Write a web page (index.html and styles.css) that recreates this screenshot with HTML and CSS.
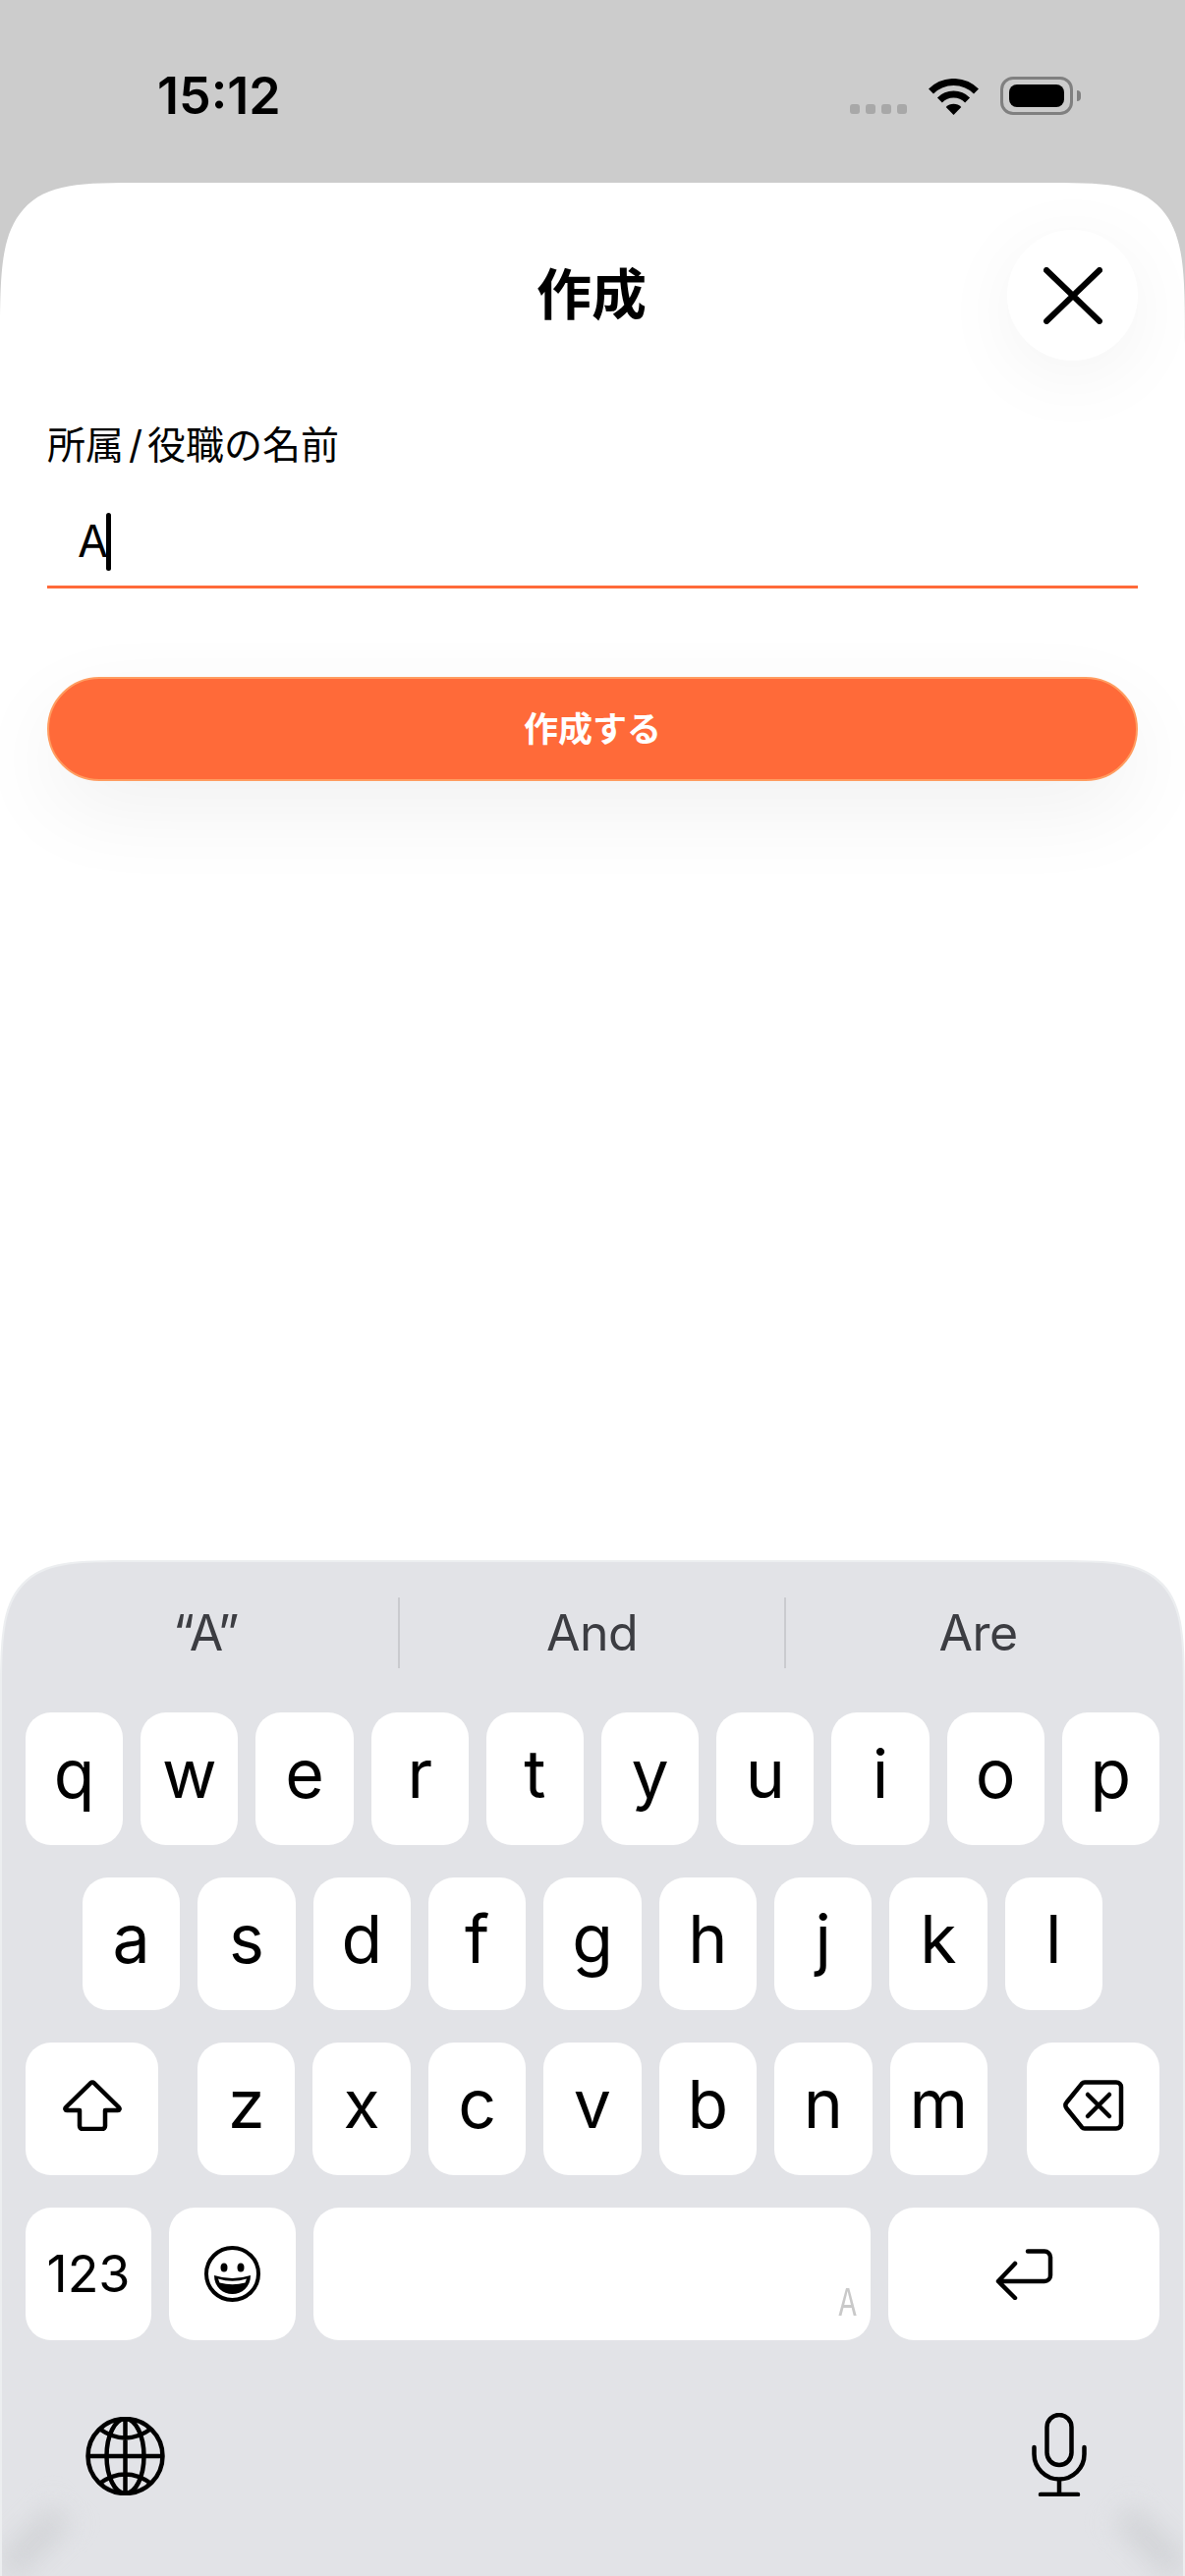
FILE: index.html
```html
<!DOCTYPE html>
<html lang="ja">
<head>
    <meta charset="UTF-8">
    <meta name="viewport" content="width=device-width, initial-scale=1.0">
    <title>作成</title>
    <link rel="stylesheet" href="styles.css">
</head>
<body>
<div class="page">
    <div class="status">
        <span class="time">15:12</span>
        <div class="status-icons">
            <div class="signal"><i></i><i></i><i></i><i></i></div>
            <svg class="wifi" width="51" height="37" viewBox="0 0 51 37">
                <path d="M2.5 13a32.5 32.5 0 0 1 46 0M11.4 21.9a20 20 0 0 1 28.2 0" fill="none" stroke="#000" stroke-width="7"/>
                <path d="M25.5 37L17.7 29A11 11 0 0 1 33.3 29Z" fill="#000"/>
            </svg>
            <div class="battery"><div class="battery-fill"></div></div>
            <div class="battery-cap"></div>
        </div>
    </div>

    <div class="sheet">
        <div class="sheet-head">
            <h1 class="title">作成</h1>
            <button class="close">
                <svg width="60" height="58" viewBox="0 0 60 58"><path d="M3 3L57 55M57 3L3 55" fill="none" stroke="#000" stroke-width="6" stroke-linecap="round"/></svg>
            </button>
        </div>
        <label class="field-label">所属<span class="slash">/</span>役職の名前</label>
        <div class="field"><span class="field-text">A</span><span class="caret"></span></div>
        <button class="submit">作成する</button>
    </div>

    <div class="keyboard">
        <div class="suggestions">
            <div class="suggestion">“A”</div>
            <div class="suggestion">And</div>
            <div class="suggestion">Are</div>
        </div>
        <div class="rows">
            <div class="row">
                <div class="key">q</div><div class="key">w</div><div class="key">e</div><div class="key">r</div><div class="key">t</div>
                <div class="key">y</div><div class="key">u</div><div class="key">i</div><div class="key">o</div><div class="key">p</div>
            </div>
            <div class="row row-middle">
                <div class="key">a</div><div class="key">s</div><div class="key">d</div><div class="key">f</div><div class="key">g</div>
                <div class="key">h</div><div class="key">j</div><div class="key">k</div><div class="key">l</div>
            </div>
            <div class="row row-third">
                <div class="key key-shift">
                    <svg width="60" height="52" viewBox="0 0 60 52"><path d="M28.4 3.2a2.3 2.3 0 0 1 3.2 0L57 28c1.2 1.2.5 3-1 3H43v16a3 3 0 0 1-3 3H20a3 3 0 0 1-3-3V31H4c-1.5 0-2.200-1.800-1-3z" fill="none" stroke="#000" stroke-width="4.500" stroke-linejoin="round"/></svg>
                </div>
                <div class="letters">
                    <div class="key">z</div><div class="key">x</div><div class="key">c</div><div class="key">v</div>
                    <div class="key">b</div><div class="key">n</div><div class="key">m</div>
                </div>
                <div class="key key-shift">
                    <svg width="62" height="52" viewBox="0 0 62 52"><path d="M22 2.500H54a5 5 0 0 1 5 5V44.500a5 5 0 0 1-5 5H22a4 4 0 0 1-3-1.300L3.500 29a4.500 4.500 0 0 1 0-6L19 3.800A4 4 0 0 1 22 2.500zM25 15L47 37M47 15L25 37" fill="none" stroke="#000" stroke-width="4.500" stroke-linecap="round" stroke-linejoin="round"/></svg>
                </div>
            </div>
            <div class="row">
                <div class="key key-123">123</div>
                <div class="key key-emoji">
                    <svg width="57" height="57" viewBox="0 0 57 57">
                        <circle cx="28.500" cy="28.500" r="26.500" fill="none" stroke="#000" stroke-width="4"/>
                        <ellipse cx="20" cy="22" rx="3.500" ry="4.500"/>
                        <ellipse cx="37" cy="22" rx="3.500" ry="4.500"/>
                        <path d="M10 30Q28.500 36 47 30C47 42 38 49 28.500 49C19 49 10 42 10 30Z"/>
                        <path d="M14 33.500Q28.500 38 43 33.500L41.500 37.500Q28.500 41 15.500 37.500Z" fill="#fff"/>
                    </svg>
                </div>
                <div class="key key-space"><span class="space-mark">A</span></div>
                <div class="key key-return">
                    <svg width="59" height="52" viewBox="0 0 59 52"><path d="M33 2.500H50a6 6 0 0 1 6 6V27a6 6 0 0 1-6 6H3M20 15L3 33L20 50" fill="none" stroke="#000" stroke-width="4.500" stroke-linecap="round" stroke-linejoin="round"/></svg>
                </div>
            </div>
        </div>
        <div class="keyboard-foot">
            <svg width="81" height="80" viewBox="0 0 81 80" fill="none" stroke="#000" stroke-width="4.500">
                <circle cx="40.500" cy="40" r="38"/>
                <ellipse cx="40.500" cy="40" rx="19" ry="38"/>
                <path d="M40.500 2V78M2.500 40H78.500M14 12Q40.500 31 67 12M14 68Q40.500 49 67 68"/>
            </svg>
            <svg class="mic" width="56" height="85" viewBox="0 0 56 85" fill="none" stroke="#000" stroke-width="4.500" stroke-linecap="round">
                <rect x="15.500" y="2" width="25" height="51" rx="12.500"/>
                <path d="M2.500 35v7a25.500 25.500 0 0 0 51 0v-7M28 68V83M9 83H47"/>
            </svg>
        </div>
        <div class="smudge smudge-left"></div>
        <div class="smudge smudge-right"></div>
    </div>
</div>
</body>
</html>
```

FILE: styles.css
```css
* {
    box-sizing: border-box;
}

body {
    margin: 0;
    font-family: Inter, "Noto Sans CJK JP", sans-serif;
    color: #000;
}

.page {
    display: flex;
    flex-direction: column;
    height: 2622px;
    background: #ccc;
    overflow: hidden;
}

/* status bar */
.status {
    display: flex;
    flex: none;
    justify-content: space-between;
    align-items: flex-start;
    height: 186px;
    padding: 68px 106px 0 160px;
}

.time {
    font-size: 52px;
    font-weight: 600;
    line-height: 60px;
}

.status-icons {
    display: flex;
    align-items: flex-end;
    margin-top: 10px;
}

.signal {
    display: flex;
    gap: 6px;
    margin-right: 22px;
    margin-bottom: 1px;
}

.signal i {
    width: 10px;
    height: 10px;
    border-radius: 3px;
    background: #a8a8a8;
}

.wifi {
    margin-right: 22px;
}

.battery {
    width: 74px;
    height: 39px;
    padding: 5px 6px;
    border: 3px solid #808080;
    border-radius: 13px;
}

.battery-fill {
    height: 100%;
    border-radius: 8px;
    background: #000;
}

.battery-cap {
    width: 4px;
    height: 11px;
    margin: 0 0 14px 4px;
    border-radius: 0 4px 4px 0;
    background: #808080;
}

/* sheet */
.sheet {
    flex: 1;
    padding: 48px 48px 0;
    border-radius: 150px 150px 0 0 / 170px 170px 0 0;
    corner-shape: squircle;
    background: #fff;
}

.sheet-head {
    display: flex;
    justify-content: flex-end;
    position: relative;
    height: 133px;
}

.title {
    position: absolute;
    top: 0;
    left: 0;
    right: 2px;
    margin: 0;
    font-size: 56px;
    font-weight: 700;
    line-height: 133px;
    text-align: center;
}

.close {
    display: flex;
    align-items: center;
    justify-content: center;
    width: 133px;
    height: 133px;
    padding: 0;
    border: none;
    border-radius: 50%;
    background: #fff;
    box-shadow: 0 16px 80px rgba(0, 0, 0, 0.05);
}

.field-label {
    display: block;
    margin-top: 50px;
    font-size: 39px;
    line-height: 72px;
}

.slash {
    margin: 0 5px;
}

.field {
    display: flex;
    align-items: center;
    height: 95px;
    margin-top: 15px;
    padding: 2px 0 0 31px;
    border-bottom: 3px solid #ff6a39;
}

.field-text {
    font-size: 45px;
    line-height: 60px;
}

.caret {
    width: 5px;
    height: 59px;
    margin-left: -2px;
    border-radius: 3px;
    background: #000;
}

.submit {
    display: block;
    width: 100%;
    height: 106px;
    margin-top: 90px;
    padding: 0 0 5px;
    border: 2px solid #ff9c60;
    border-radius: 53px;
    background: #ff6a39;
    color: #fff;
    font-family: Inter, "Noto Sans CJK JP", sans-serif;
    font-size: 35px;
    font-weight: 700;
    box-shadow: 0 30px 90px rgba(0, 0, 0, 0.06);
}

/* keyboard */
.keyboard {
    flex: none;
    position: relative;
    height: 1034px;
    margin-top: -1034px;
    padding-top: 36px;
    border: 2px solid #eceef0;
    border-bottom: none;
    border-radius: 140px 140px 0 0 / 150px 150px 0 0;
    corner-shape: squircle;
    background: #e2e3e7;
    overflow: hidden;
}

.suggestions {
    display: flex;
    height: 72px;
    padding: 0 13px 0 12px;
}

.suggestion {
    flex: 1;
    font-size: 50px;
    letter-spacing: -0.5px;
    line-height: 72px;
    text-align: center;
    color: #3c3d42;
}

.suggestion + .suggestion {
    border-left: 2px solid #cacbcf;
}

.rows {
    display: flex;
    flex-direction: column;
    gap: 33px;
    margin-top: 45px;
}

.row {
    display: flex;
    gap: 18px;
    padding: 0 24px;
}

.row-middle {
    padding: 0 82px;
}

.row-third {
    justify-content: space-between;
}

.letters {
    display: flex;
    gap: 18px;
    width: 804px;
}

.key {
    display: flex;
    flex: 1;
    align-items: center;
    justify-content: center;
    position: relative;
    height: 135px;
    padding-bottom: 12px;
    border-radius: 26px;
    background: #fff;
    font-size: 68px;
    line-height: 80px;
}

.key-shift {
    flex: none;
    width: 135px;
    padding-bottom: 8px;
}

.key-123 {
    flex: none;
    width: 128px;
    padding: 0;
    font-size: 52px;
}

.key-emoji {
    flex: none;
    width: 129px;
    padding: 0;
}

.key-space {
    flex: none;
    width: 567px;
}

.key-return {
    flex: none;
    width: 276px;
    padding: 0;
}

.space-mark {
    position: absolute;
    right: 11px;
    bottom: 16px;
    color: #c9c9c9;
    font-family: "Liberation Mono", monospace;
    font-size: 42px;
    line-height: 40px;
    transform: scaleX(0.72);
}

.keyboard-foot {
    display: flex;
    justify-content: space-between;
    align-items: center;
    padding: 76px 98px 0 85px;
}

.mic {
    margin-top: -2px;
}

.smudge {
    position: absolute;
    bottom: 22px;
    width: 80px;
    height: 24px;
    background: #ced0d3;
    filter: blur(14px);
}

.smudge-left {
    left: -8px;
    transform: rotate(-45deg);
}

.smudge-right {
    right: -8px;
    transform: rotate(45deg);
}
```
